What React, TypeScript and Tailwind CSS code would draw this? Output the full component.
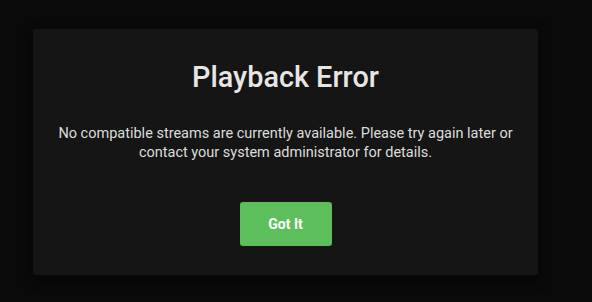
export default function App() {
  return (
    <div
      className="w-full h-[302px] bg-[#0a0a0a] pt-[29px] pl-[33px]"
      style={{ fontFamily: 'Roboto, "Noto Sans", sans-serif' }}
    >
      <div className="w-[505px] h-[246px] bg-[#151515] rounded-[3px] shadow-[0_4px_12px_rgba(0,0,0,0.6)] flex flex-col items-center pt-[32px]">
        <h1 className="text-[28.8px] leading-[32px] font-medium text-[#e6e6e6]">Playback Error</h1>
        <p className="mt-[31px] text-[14.5px] leading-[19px] text-[#dddddd] text-center px-4">
          No compatible streams are currently available. Please try again later or
          <br />
          contact your system administrator for details.
        </p>
        <button className="mt-[40px] w-[92px] h-[44px] rounded-[3px] bg-[#5cbf5c] text-white text-[14px] font-bold">
          Got It
        </button>
      </div>
    </div>
  );
}
